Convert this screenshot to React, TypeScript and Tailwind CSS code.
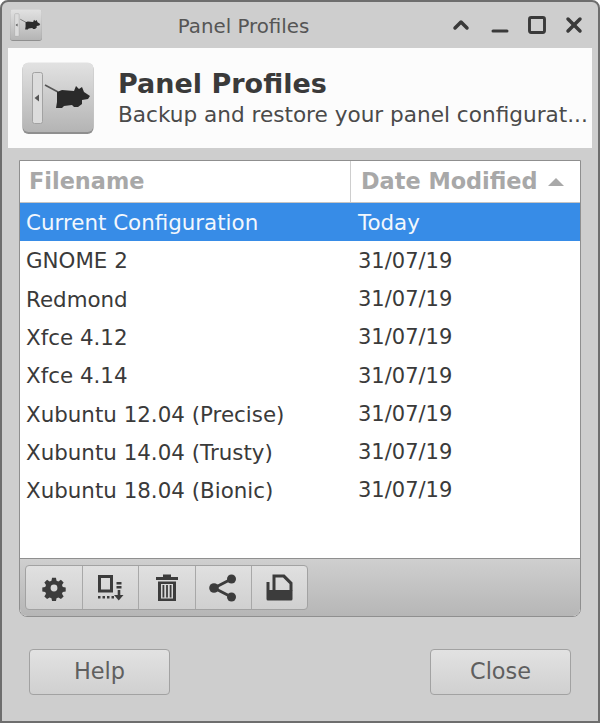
import React from 'react';
import { ChevronUp, Minus, Square, X } from 'lucide-react';

const ROWS = [
  { name: 'Current Configuration', date: 'Today' },
  { name: 'GNOME 2', date: '31/07/19' },
  { name: 'Redmond', date: '31/07/19' },
  { name: 'Xfce 4.12', date: '31/07/19' },
  { name: 'Xfce 4.14', date: '31/07/19' },
  { name: 'Xubuntu 12.04 (Precise)', date: '31/07/19' },
  { name: 'Xubuntu 14.04 (Trusty)', date: '31/07/19' },
  { name: 'Xubuntu 18.04 (Bionic)', date: '31/07/19' },
];

// Panel + mouse app icon, drawn on a 72x72 box
function AppIcon({ size }: { size: number }) {
  return (
    <svg width={size} height={size} viewBox="0 0 72 72">
      <defs>
        <linearGradient id="tile" x1="0" y1="0" x2="0" y2="1">
          <stop offset="0" stopColor="#e2e2e2" />
          <stop offset="1" stopColor="#b4b4b4" />
        </linearGradient>
      </defs>
      <rect x="0.5" y="1" width="71" height="71" rx="6" fill="#8f8f8f" />
      <rect x="0.5" y="0.5" width="71" height="69.5" rx="6" fill="url(#tile)" />
      <rect x="10.5" y="10.5" width="10" height="51" rx="2" fill="#dcdcdc" stroke="#a2a2a2" />
      <path d="M12.5 36 L17 32.5 V39.5 Z" fill="#555" />
      <path d="M23 23 L36 30" stroke="#555" strokeWidth="1.5" fill="none" />
      <path
        d="M35 30 L40 28 L52 29 L54 24 L57 27 L60 25 L62 30 L68 34 L66 37 L60 38 L60 42 L56 45 L52 45 L50 43 L42 44 L40 46 L34 46 L35 40 Z"
        fill="#2a2a2a"
      />
    </svg>
  );
}

function GearIcon() {
  return (
    <svg width="26" height="26" viewBox="0 0 24 24" fill="#3c3c3c">
      <path
        fillRule="evenodd"
        d="M10 1.5h4l.6 3 1.9.8 2.6-1.7 2.8 2.8-1.7 2.6.8 1.9 3 .6v4l-3 .6-.8 1.9 1.7 2.6-2.8 2.8-2.6-1.7-1.9.8-.6 3h-4l-.6-3-1.9-.8-2.6 1.7-2.8-2.8 1.7-2.6-.8-1.9-3-.6v-4l3-.6.8-1.9-1.7-2.6 2.8-2.8 2.6 1.7 1.9-.8zM12 8.5a3.5 3.5 0 1 0 0 7 3.5 3.5 0 0 0 0-7z"
        transform="translate(1.2 1.2) scale(0.9)"
      />
    </svg>
  );
}

function ImportIcon() {
  return (
    <svg width="28" height="28" viewBox="0 0 28 28" fill="#3c3c3c">
      <path fillRule="evenodd" d="M1 1h15v17.500H1zM4 4v11.500h9V4z" />
      <rect x="1" y="22" width="2.500" height="2.500" />
      <rect x="5.500" y="22" width="2.500" height="2.500" />
      <rect x="10" y="22" width="2.500" height="2.500" />
      <rect x="14.500" y="22" width="2.500" height="2.500" />
      <rect x="19.500" y="8" width="5" height="2.500" />
      <rect x="19.500" y="12" width="5" height="2.500" />
      <rect x="20.700" y="16" width="2.600" height="6" />
      <path d="M17 21h9.500l-4.750 5.500z" />
    </svg>
  );
}

function TrashIcon() {
  return (
    <svg width="22" height="27" viewBox="0 0 22 27" fill="#3c3c3c">
      <path fillRule="evenodd" d="M7 0.500h8v2.500h7v3H0v-3h7zM2 7.500h18v19.500H2zM5 10v14.500h12V10z" />
      <rect x="6.500" y="11" width="1.800" height="12.500" />
      <rect x="10.100" y="11" width="1.800" height="12.500" />
      <rect x="13.700" y="11" width="1.800" height="12.500" />
    </svg>
  );
}

function ShareIcon() {
  return (
    <svg width="28" height="28" viewBox="0 0 28 28" fill="#3c3c3c">
      <circle cx="22.500" cy="5" r="4.500" />
      <circle cx="5" cy="14" r="4.800" />
      <circle cx="22.500" cy="23" r="4.500" />
      <path d="M5 14 L22.500 5 M5 14 L22.500 23" stroke="#3c3c3c" strokeWidth="3" fill="none" />
    </svg>
  );
}

function ExportIcon() {
  return (
    <svg width="27" height="27" viewBox="0 0 27 27" fill="#3c3c3c">
      <path fillRule="evenodd" d="M6.500 0.500h12l8 8v8h-3V10l-6.500-6.500h-7.500V16h-3z" />
      <path d="M0.500 8h3v8h23v9a1.500 1.500 0 0 1-1.500 1.500H2a1.500 1.500 0 0 1-1.500-1.500z" />
    </svg>
  );
}

const TOOLS = [
  { id: 'settings', icon: <GearIcon /> },
  { id: 'import', icon: <ImportIcon /> },
  { id: 'delete', icon: <TrashIcon /> },
  { id: 'share', icon: <ShareIcon /> },
  { id: 'export', icon: <ExportIcon /> },
];

export default function App() {
  return (
    <div className="w-[600px] h-[723px] flex flex-col overflow-hidden rounded-t-lg border-2 border-[#6e6e6e] bg-[#cecece] font-['DejaVu_Sans',sans-serif]">
      {/* Title bar */}
      <div className="h-[46px] shrink-0 flex items-center pl-[8px] pr-[12px]">
        <AppIcon size={32} />
        <span className="flex-1 text-center text-[19.800px] text-[#555555] pl-[-4px] pr-[4px] pt-[3px]">Panel Profiles</span>
        <div className="flex items-center gap-[15px] text-[#3a3a3a]">
          <ChevronUp size={24} strokeWidth={3.5} />
          <Minus size={24} strokeWidth={3} className="translate-y-[6px]" />
          <Square size={20} strokeWidth={3.5} />
          <X size={24} strokeWidth={3.5} />
        </div>
      </div>

      {/* Banner */}
      <div className="h-[100px] shrink-0 mx-[6px] bg-[#fcfcfc] flex items-center pl-[14px]">
        <AppIcon size={72} />
        <div className="ml-[24px] flex flex-col min-w-0">
          <span className="text-[27px] leading-[32px] font-bold text-[#3a3a3a]">Panel Profiles</span>
          <span className="text-[21.600px] leading-[29px] text-[#4a4a4a] whitespace-nowrap">Backup and restore your panel configurat...</span>
        </div>
      </div>

      {/* List frame */}
      <div className="mt-[12px] ml-[17px] mr-[17px] h-[457px] shrink-0 flex flex-col rounded-b-lg border border-[#8f8f8f] bg-white overflow-hidden">
        <div className="h-[42px] shrink-0 flex border-b border-[#c4c4c4] text-[22.400px] font-bold text-[#a8a8a8]">
          <div className="w-[331px] border-r border-[#cecece] pl-[9px] flex items-center">Filename</div>
          <div className="flex-1 pl-[10px] flex items-center gap-[10px]">
            Date Modified
            <span className="w-0 h-0 border-x-[8px] border-x-transparent border-b-[8px] border-b-[#a8a8a8]" />
          </div>
        </div>

        <div className="flex-1 min-h-0 flex flex-col text-[21.400px] text-[#3a3a3a]">
          {ROWS.map((row, i) => (
            <div
              key={row.name}
              className={`h-[38.300px] shrink-0 flex items-center pt-[2px] ${i === 0 ? 'bg-[#378ce7] text-[#f2f7fd]' : ''}`}
            >
              <span className="w-[332px] pl-[6px] whitespace-nowrap">{row.name}</span>
              <span className={i === 0 ? 'pl-[6px]' : 'pl-[6px] text-[21px]'}>{row.date}</span>
            </div>
          ))}
        </div>

        {/* Toolbar */}
        <div className="h-[58px] shrink-0 border-t border-[#8f8f8f] bg-gradient-to-b from-[#cfcfcf] to-[#b6b6b6] pl-[5px] pt-[6px]">
          <div className="inline-flex h-[45px] rounded-[4px] border border-[#a2a2a2] bg-gradient-to-b from-[#e0e0e0] to-[#d0d0d0]">
            {TOOLS.map((tool, i) => (
              <div
                key={tool.id}
                className={`w-[56.200px] flex items-center justify-center ${i > 0 ? 'border-l border-[#a8a8a8]' : ''}`}
              >
                {tool.icon}
              </div>
            ))}
          </div>
        </div>
      </div>

      {/* Action buttons */}
      <div className="flex-1 flex items-start justify-between pt-[32px] px-[27px]">
        <div className="w-[141px] h-[46px] rounded-[4px] border border-[#a2a2a2] bg-gradient-to-b from-[#e2e2e2] to-[#d0d0d0] flex items-center justify-center text-[22.400px] text-[#5f5f5f]">Help</div>
        <div className="w-[141px] h-[46px] rounded-[4px] border border-[#a2a2a2] bg-gradient-to-b from-[#e2e2e2] to-[#d0d0d0] flex items-center justify-center text-[22.400px] text-[#5f5f5f]">Close</div>
      </div>
    </div>
  );
}
